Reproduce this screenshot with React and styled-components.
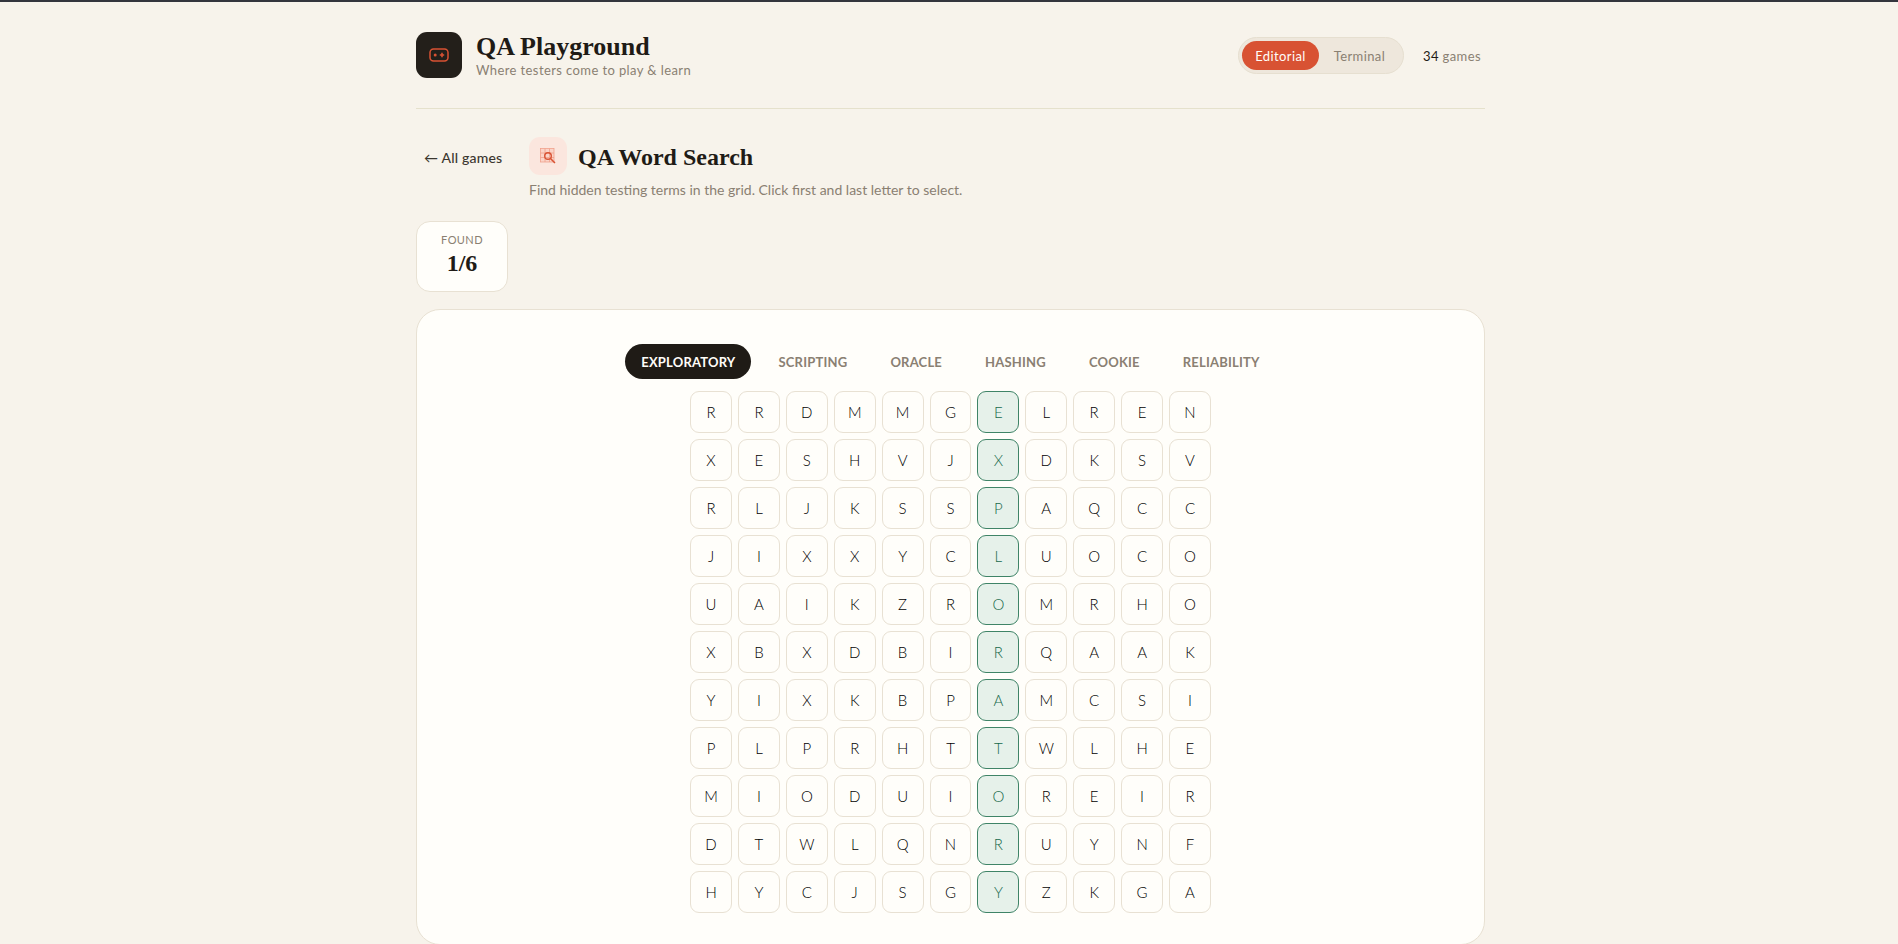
import React from "react"
import styled, { createGlobalStyle } from "styled-components"

const GlobalStyle = createGlobalStyle`
    * { box-sizing: border-box; }
    html, body { margin: 0; padding: 0; background: #f7f3eb; }
    body {
        font-family: "Lato", sans-serif;
        color: #1f1b16;
        border-top: 2px solid #33353d;
    }
`

const Page = styled.div`
    width: 1069px;
    margin-left: 416px;
`

const Header = styled.header`
    display: flex;
    align-items: center;
    justify-content: space-between;
    height: 107px;
    padding: 0 4px 0 0;
    border-bottom: 1px solid #e5e1cc;
`

const Brand = styled.div`
    display: flex;
    align-items: center;
    gap: 14px;
`

const LogoBox = styled.div`
    width: 46px;
    height: 46px;
    border-radius: 11px;
    background: #231f1a;
    display: flex;
    align-items: center;
    justify-content: center;
`

const BrandName = styled.h1`
    margin: 0;
    font-family: "Liberation Serif", serif;
    font-size: 26px;
    line-height: 30px;
    font-weight: 700;
`

const BrandTag = styled.div`
    font-size: 13px;
    line-height: 17px;
    color: #8a8072;
    letter-spacing: 0.4px;
`

const HeaderRight = styled.div`
    display: flex;
    align-items: center;
    gap: 19px;
`

const Toggle = styled.div`
    display: flex;
    align-items: center;
    height: 37px;
    padding: 3px;
    border: 1px solid #e6dfd0;
    border-radius: 19px;
    background: #eee7dc;
`

const ToggleOption = styled.div`
    height: 29px;
    width: ${({ $active }) => ($active ? "77px" : "81px")};
    border-radius: 15px;
    display: flex;
    align-items: center;
    justify-content: center;
    padding-top: 1px;
    font-size: 13px;
    letter-spacing: 0.4px;
    background: ${({ $active }) => ($active ? "#d85233" : "transparent")};
    color: ${({ $active }) => ($active ? "#fffdf9" : "#8a8072")};
`

const GamesCount = styled.div`
    font-size: 13px;
    padding-top: 1px;
    color: #8a8072;
    letter-spacing: 0.4px;

    strong {
        font-weight: 400;
        color: #1f1b16;
    }
`

const TitleRow = styled.div`
    display: flex;
    align-items: flex-start;
    padding: 28px 0 0 8px;
`

const BackLink = styled.a`
    font-size: 14px;
    font-weight: 500;
    letter-spacing: 0.2px;
    color: #3b362f;
    margin-top: 12px;
    width: 105px;
`

const TitleGroup = styled.div`
    display: flex;
    flex-direction: column;
    gap: 6px;
`

const TitleLine = styled.div`
    display: flex;
    align-items: center;
    gap: 11px;
`

const GameIcon = styled.div`
    width: 38px;
    height: 38px;
    border-radius: 11px;
    background: #fbe6de;
    display: flex;
    align-items: center;
    justify-content: center;
`

const GameTitle = styled.h2`
    margin: 0;
    padding-top: 2px;
    font-family: "Liberation Serif", serif;
    font-size: 24px;
    font-weight: 700;
`

const GameHint = styled.div`
    font-size: 14px;
    line-height: 18px;
    color: #8a8072;
`

const StatCard = styled.div`
    width: 92px;
    height: 71px;
    margin-top: 22px;
    border: 1px solid #e8e1d3;
    border-radius: 14px;
    background: #fffefa;
    display: flex;
    flex-direction: column;
    align-items: center;
    padding-top: 10px;
`

const StatLabel = styled.div`
    font-size: 11px;
    line-height: 16px;
    letter-spacing: 0.4px;
    color: #8a8072;
`

const StatValue = styled.div`
    font-family: "Liberation Serif", serif;
    font-size: 24px;
    line-height: 30px;
    font-weight: 700;
`

const Board = styled.section`
    margin-top: 17px;
    height: 636px;
    border: 1px solid #e8e1d3;
    border-radius: 24px;
    background: #fffefa;
    padding-top: 34px;
    display: flex;
    flex-direction: column;
    align-items: center;
`

const WordList = styled.div`
    display: flex;
    align-items: center;
    gap: 11px;
    margin-bottom: 12px;
`

const Word = styled.div`
    height: 35px;
    padding: 0 16px;
    border-radius: 18px;
    display: flex;
    align-items: center;
    font-size: 13px;
    font-weight: 700;
    letter-spacing: 0.2px;
    background: ${({ $active }) => ($active ? "#1f1b16" : "transparent")};
    color: ${({ $active }) => ($active ? "#fffdf9" : "#8a8072")};
`

const Grid = styled.div`
    display: grid;
    grid-template-columns: repeat(11, 41.9px);
    gap: 6px;
`

const Cell = styled.div`
    height: 42px;
    border-radius: 9px;
    display: flex;
    align-items: center;
    justify-content: center;
    font-size: 15px;
    font-weight: 300;
    border: 1px solid ${({ $found }) => ($found ? "#3f8467" : "#e8e1d3")};
    background: ${({ $found }) => ($found ? "#e6f1ea" : "#fffefa")};
    color: ${({ $found }) => ($found ? "#17694a" : "#000")};
`

const LETTERS = [
    "RRDMMGELREN",
    "XESHVJXDKSV",
    "RLJKSSPAQCC",
    "JIXXYCLUOCO",
    "UAIKZROMRHO",
    "XBXDBIRQAAK",
    "YIXKBPAMCSI",
    "PLPRHTTWLHE",
    "MIODUIOREIR",
    "DTWLQNRUYNF",
    "HYCJSGYZKGA",
]

const WORDS = ["EXPLORATORY", "SCRIPTING", "ORACLE", "HASHING", "COOKIE", "RELIABILITY"]

function LogoIcon() {
    return (
        <svg width="20" height="14" viewBox="0 0 20 14" fill="none">
            <rect x="1" y="1" width="18" height="12" rx="3.5" stroke="#d85233" strokeWidth="1.5" />
            <circle cx="6.2" cy="7" r="1.5" fill="#d85233" />
            <path d="M10.8 7h4.4M13 4.8v4.4" stroke="#d85233" strokeWidth="1.6" />
        </svg>
    )
}

function SearchGridIcon() {
    return (
        <svg width="16" height="16" viewBox="0 0 16 16" fill="none">
            <rect x="0.5" y="0.5" width="13.5" height="13.5" fill="#fbd4c8" stroke="#f0a18c" strokeWidth="0.8" />
            <path d="M5 0.5v13.5M9.5 0.5v13.5M0.5 5h13.5M0.5 9.5h13.5" stroke="#f0a18c" strokeWidth="0.8" />
            <circle cx="8" cy="8" r="3.3" stroke="#d85233" strokeWidth="1.4" />
            <path d="M10.5 10.5L15 15" stroke="#d85233" strokeWidth="1.5" />
        </svg>
    )
}

export default function App() {
    return (
        <Page>
            <GlobalStyle />
            <Header>
                <Brand>
                    <LogoBox><LogoIcon /></LogoBox>
                    <div>
                        <BrandName>QA Playground</BrandName>
                        <BrandTag>Where testers come to play &amp; learn</BrandTag>
                    </div>
                </Brand>
                <HeaderRight>
                    <Toggle>
                        <ToggleOption $active>Editorial</ToggleOption>
                        <ToggleOption>Terminal</ToggleOption>
                    </Toggle>
                    <GamesCount><strong>34</strong> games</GamesCount>
                </HeaderRight>
            </Header>
            <TitleRow>
                <BackLink>← All games</BackLink>
                <TitleGroup>
                    <TitleLine>
                        <GameIcon><SearchGridIcon /></GameIcon>
                        <GameTitle>QA Word Search</GameTitle>
                    </TitleLine>
                    <GameHint>Find hidden testing terms in the grid. Click first and last letter to select.</GameHint>
                </TitleGroup>
            </TitleRow>
            <StatCard>
                <StatLabel>FOUND</StatLabel>
                <StatValue>1/6</StatValue>
            </StatCard>
            <Board>
                <WordList>
                    {WORDS.map((word, i) => <Word key={word} $active={i === 0}>{word}</Word>)}
                </WordList>
                <Grid>
                    {LETTERS.map((row, r) =>
                        row.split("").map((letter, c) => (
                            <Cell key={r + "-" + c} $found={c === 6}>{letter}</Cell>
                        ))
                    )}
                </Grid>
            </Board>
        </Page>
    )
}
